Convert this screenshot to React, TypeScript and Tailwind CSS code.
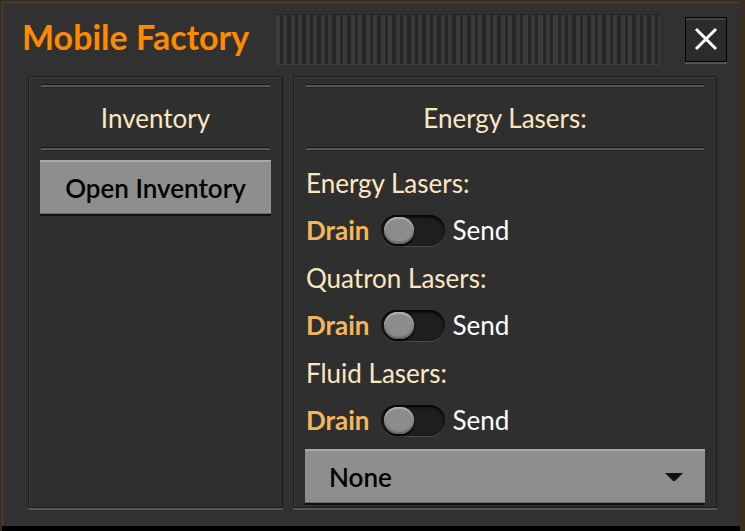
import React from 'react'

function Line() {
  return <div className="h-[3px] border-t border-[#151515] bg-[#565656] shadow-[0_1px_0_#262626]" />
}

function Toggle() {
  return (
    <div className="relative h-[31px] w-[64px] rounded-full bg-[#1e1e1e] shadow-[inset_0_2px_3px_#000,0_1px_0_#4a4a4a]">
      <div className="absolute left-[3px] top-[2px] h-[27px] w-[30px] rounded-full bg-[#8c8c8c] shadow-[inset_0_2px_1px_#b0b0b0,inset_0_-2px_2px_#606060,0_2px_2px_#000]" />
    </div>
  )
}

function LaserRow({ label }: { label: string }) {
  return (
    <div>
      <div className="h-[32px] leading-[32px] text-[#ffe6c0]">{label}</div>
      <div className="mt-[15px] flex h-[32px] items-center">
        <span className="font-bold text-[#f3b75a]">Drain</span>
        <div className="ml-[11px] mr-[8px]">
          <Toggle />
        </div>
        <span className="text-white">Send</span>
      </div>
    </div>
  )
}

function Panel({ className, children }: { className: string; children: React.ReactNode }) {
  return (
    <div
      className={`flex flex-col border border-[#1d1d1d] bg-[#2f2f2f] px-[12px] pt-[7px] shadow-[inset_1px_1px_0_#3a3a3a,0_2px_0_#555] ${className}`}
    >
      {children}
    </div>
  )
}

export default function App() {
  return (
    <div className="h-[531px] w-[745px] overflow-hidden bg-[#3a2d1f] pl-[2px] pt-[2px] font-['Lato',sans-serif] text-[26px]">
      <div className="flex h-[524px] w-[738px] flex-col bg-[#313131] shadow-[0_5px_0_#000,inset_1px_1px_0_#444]">
        {/* Title bar */}
        <div className="flex h-[74px] items-center pl-[20px] pr-[13px]">
          <h1 className="pb-[4px] text-[34px] font-bold leading-none text-[#ff8a00]">Mobile Factory</h1>
          <div className="ml-[27px] h-[50px] flex-1 border-t border-[#242424] bg-[repeating-linear-gradient(90deg,#3a3a3a_0px,#3a3a3a_4px,#272727_4px,#272727_7.5px)] shadow-[0_1px_0_#3d3d3d]" />
          <button
            type="button"
            className="ml-[25px] flex h-[45px] w-[42px] items-center justify-center border border-black bg-[#2c2c2c] shadow-[inset_0_2px_0_#444,0_2px_0_#555]"
          >
            <svg width="24" height="24" viewBox="0 0 24 24">
              <path d="M2 2 L22 22 M22 2 L2 22" stroke="#fff" strokeWidth="3" />
            </svg>
          </button>
        </div>

        {/* Body */}
        <div className="flex gap-[10px] pl-[26px]">
          <Panel className="h-[432px] w-[255px]">
            <Line />
            <div className="mt-[15px] h-[32px] text-center leading-[32px] text-[#ffe6c0]">Inventory</div>
            <div className="mt-[13px]">
              <Line />
            </div>
            <button
              type="button"
              className="-mx-[1px] mt-[10px] h-[54px] border-t-2 border-[#a9a9a9] bg-[#8e8e8e] font-semibold text-black shadow-[0_2px_0_#111,inset_0_-1px_0_#6a6a6a]"
            >
              Open Inventory
            </button>
          </Panel>

          <Panel className="h-[432px] w-[424px]">
            <Line />
            <div className="mt-[15px] h-[32px] text-center leading-[32px] text-[#ffe6c0]">Energy Lasers:</div>
            <div className="mt-[13px]">
              <Line />
            </div>
            <div className="mt-[17px] flex flex-col gap-[16px]">
              <LaserRow label="Energy Lasers:" />
              <LaserRow label="Quatron Lasers:" />
              <LaserRow label="Fluid Lasers:" />
            </div>
            <div className="-mx-[1px] mt-[13px] flex h-[54px] items-center justify-between border-t-2 border-[#a9a9a9] bg-[#8e8e8e] pl-[24px] pr-[22px] font-semibold text-black shadow-[0_2px_0_#111,inset_0_-1px_0_#6a6a6a]">
              <span>None</span>
              <svg width="18" height="9" viewBox="0 0 18 9">
                <path d="M0 0 H18 L10 8 H8 Z" fill="#111" />
              </svg>
            </div>
          </Panel>
        </div>
      </div>
    </div>
  )
}
